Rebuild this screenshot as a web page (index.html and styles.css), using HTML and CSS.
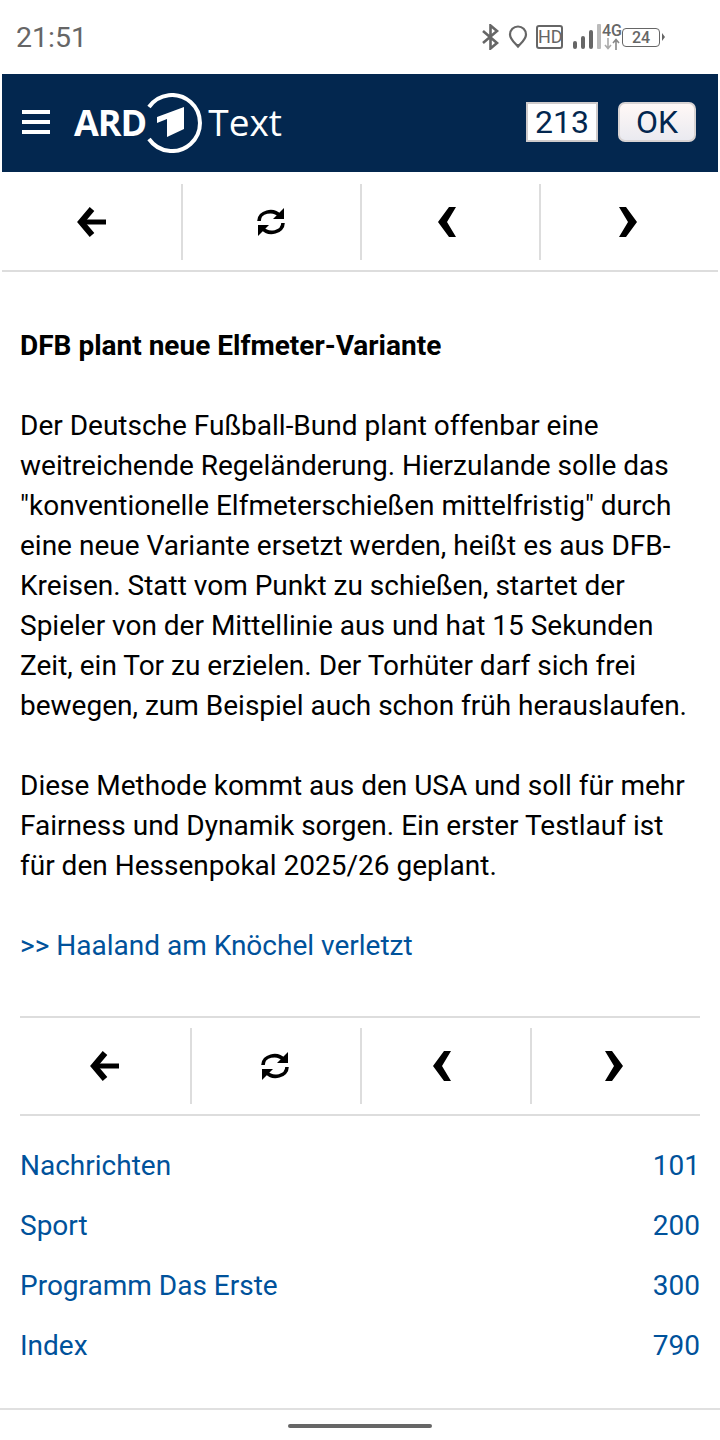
FILE: index.html
```html
<!DOCTYPE html>
<html lang="de">
<head>
  <meta charset="UTF-8" />
  <meta name="viewport" content="width=device-width, initial-scale=1.0" />
  <title>ARD Text</title>
  <link rel="stylesheet" href="styles.css">
</head>
<body>
  <div class="statusbar">
    <span class="uhr">21:51</span>
    <div class="status-icons">
      <svg width="20" height="26" viewBox="0 0 20 26" fill="none" stroke="#666" stroke-width="2.6"><path d="M2 7l14 12-6.500 5.500V1.500L16 7 2 19"/></svg>
      <svg class="pin" width="20" height="24" viewBox="0 0 20 24" fill="none" stroke="#666" stroke-width="2.2"><path d="M10 21.500C7 18 2 14.500 2 9.500a8 8 0 0 1 16 0c0 5-5 8.500-8 12z"/><path d="M7 19h6l-3 3.500z" fill="#666" stroke="none"/></svg>
      <span class="hd">HD</span>
      <svg class="signal" width="28" height="26" viewBox="0 0 28 26"><rect x="0" y="17" width="4" height="8" rx="2" fill="#666"/><rect x="8" y="12" width="4" height="13" rx="2" fill="#666"/><rect x="16" y="6" width="4" height="19" rx="2" fill="#666"/><rect x="24" y="0" width="4" height="25" rx="1" fill="#bbb"/></svg>
      <div class="netz">
        <span class="netz-typ">4G</span>
        <svg width="16" height="12" viewBox="0 0 16 12" fill="none" stroke-width="1.600"><path d="M4 0v10M1 7l3 3.500L7 7" stroke="#aaa"/><path d="M12 12V2M9 5l3-3.500L15 5" stroke="#888"/></svg>
      </div>
      <div class="akku"><span>24</span></div>
      <i class="akku-pol"></i>
    </div>
  </div>

  <header class="kopf">
    <div class="menu"><i></i><i></i><i></i></div>
    <div class="logo">
      <span class="logo-ard">ARD</span>
      <svg class="logo-eins" width="60" height="60" viewBox="0 0 60 60" fill="none"><path d="M7 14A28 28 0 1 1 7 46" stroke="#fff" stroke-width="4"/><path d="M42 14v22l-17 8V26l-10 4v-6z" fill="#fff"/></svg>
      <span class="logo-text">Text</span>
    </div>
    <div class="seite-form">
      <div class="seite-feld">213</div>
      <button class="ok-btn">OK</button>
    </div>
  </header>

  <nav class="nav nav-oben">
    <a class="nav-item"><svg class="ico" width="32" height="32" viewBox="0 0 32 32" fill="none" stroke="#000"><path d="M16 3L5 16l11 13" stroke-width="6"/><path d="M7 16h23" stroke-width="5"/></svg></a>
    <a class="nav-item"><svg class="ico" width="32" height="32" viewBox="0 0 32 32" fill="none" stroke="#000" stroke-width="3.600"><path d="M3 15C3 6 17 2 24 10"/><path d="M27 17c0 9-14 13-21 5"/><path d="M28 2v11H17z" fill="#000" stroke="none"/><path d="M2 30V19h11z" fill="#000" stroke="none"/></svg></a>
    <a class="nav-item"><svg class="ico" width="32" height="32" viewBox="0 0 32 32"><path d="M14 1h7l-9 15 9 15h-7L3 16z" fill="#000"/></svg></a>
    <a class="nav-item"><svg class="ico" width="32" height="32" viewBox="0 0 32 32"><path d="M5 1h7l11 15-11 15H5l9-15z" fill="#000"/></svg></a>
  </nav>

  <main class="inhalt">
    <h1 class="titel">DFB plant neue Elfmeter-Variante</h1>
    <p>Der Deutsche Fußball-Bund plant offenbar eine weitreichende Regeländerung. Hierzulande solle das "konventionelle Elfmeterschießen mittelfristig" durch eine neue Variante ersetzt werden, heißt es aus DFB-Kreisen. Statt vom Punkt zu schießen, startet der Spieler von der Mittellinie aus und hat 15 Sekunden Zeit, ein Tor zu erzielen. Der Torhüter darf sich frei bewegen, zum Beispiel auch schon früh herauslaufen.</p>
    <p>Diese Methode kommt aus den USA und soll für mehr Fairness und Dynamik sorgen. Ein erster Testlauf ist für den Hessenpokal 2025/26 geplant.</p>
    <p><a class="link">&gt;&gt; Haaland am Knöchel verletzt</a></p>

    <nav class="nav nav-unten">
      <a class="nav-item"><svg class="ico" width="32" height="32" viewBox="0 0 32 32" fill="none" stroke="#000"><path d="M16 3L5 16l11 13" stroke-width="6"/><path d="M7 16h23" stroke-width="5"/></svg></a>
      <a class="nav-item"><svg class="ico" width="32" height="32" viewBox="0 0 32 32" fill="none" stroke="#000" stroke-width="3.600"><path d="M3 15C3 6 17 2 24 10"/><path d="M27 17c0 9-14 13-21 5"/><path d="M28 2v11H17z" fill="#000" stroke="none"/><path d="M2 30V19h11z" fill="#000" stroke="none"/></svg></a>
      <a class="nav-item"><svg class="ico" width="32" height="32" viewBox="0 0 32 32"><path d="M14 1h7l-9 15 9 15h-7L3 16z" fill="#000"/></svg></a>
      <a class="nav-item"><svg class="ico" width="32" height="32" viewBox="0 0 32 32"><path d="M5 1h7l11 15-11 15H5l9-15z" fill="#000"/></svg></a>
    </nav>

    <ul class="rubriken">
      <li><a>Nachrichten</a><a>101</a></li>
      <li><a>Sport</a><a>200</a></li>
      <li><a>Programm Das Erste</a><a>300</a></li>
      <li><a>Index</a><a>790</a></li>
    </ul>
  </main>

  <div class="homebar"><i></i></div>
</body>
</html>
```

FILE: styles.css
```css
body {
  margin: 0;
  height: 1440px;
  display: flex;
  flex-direction: column;
  overflow: hidden;
  background: #fff;
  color: #000;
  font-family: Roboto, sans-serif;
  font-size: 28px;
  line-height: 40px;
}
.statusbar {
  height: 74px;
  display: flex;
  justify-content: space-between;
  align-items: center;
  padding: 0 55px 0 16px;
  box-sizing: border-box;
  color: #666;
}
.uhr {
  font-size: 28.5px;
  padding-top: 2px;
}
.status-icons {
  display: flex;
  align-items: center;
  color: #666;
}
.pin {
  margin-left: 7px;
}
.hd {
  margin-left: 8px;
  width: 23px;
  height: 20px;
  border: 2px solid #666;
  border-radius: 3px;
  font-size: 18px;
  line-height: 20px;
  text-align: center;
}
.signal {
  margin-left: 10px;
}
.netz {
  display: flex;
  flex-direction: column;
  align-items: center;
  width: 18px;
  margin-left: 2px;
}
.netz-typ {
  font-size: 16px;
  line-height: 14px;
  font-weight: 500;
}
.akku {
  margin-left: 1px;
  width: 36px;
  height: 17px;
  border: 1.500px solid #666;
  border-radius: 4px;
  font-size: 16px;
  font-weight: 500;
  line-height: 17px;
  text-align: center;
}
.akku-pol {
  width: 0;
  height: 0;
  margin-left: 2px;
  border-left: 3px solid #666;
  border-top: 4px solid transparent;
  border-bottom: 4px solid transparent;
}
.kopf {
  height: 98px;
  margin: 0 2px;
  padding: 0 22px 0 20px;
  display: flex;
  align-items: center;
  background: #03274f;
  color: #fff;
}
.menu {
  width: 28px;
  display: flex;
  flex-direction: column;
  gap: 6px;
  margin-top: -2px;
}
.menu i {
  height: 4px;
  background: #fff;
}
.logo {
  display: flex;
  align-items: center;
  margin-left: 24px;
}
.logo-ard {
  font-size: 36px;
  font-weight: 700;
  font-family: "Open Sans", sans-serif;
  letter-spacing: -1px;
}
.logo-eins {
  margin-left: -4px;
}
.logo-text {
  font-size: 37px;
  font-family: "Open Sans", sans-serif;
  font-weight: 400;
  margin-left: 6px;
  margin-top: -3px;
}
.seite-form {
  margin-left: auto;
  display: flex;
  align-items: center;
  gap: 20px;
  margin-top: -2px;
}
.seite-feld {
  width: 68px;
  height: 36px;
  border: 2px solid #cfcbcb;
  background: #fff;
  color: #03274f;
  font-size: 32px;
  line-height: 36px;
  text-align: center;
}
.ok-btn {
  width: 78px;
  height: 40px;
  padding: 0;
  border: 2px solid #d8d3d3;
  border-radius: 7px;
  background: linear-gradient(#fff8f6, #eaeaf0);
  color: #03274f;
  font-family: Roboto, sans-serif;
  font-size: 32px;
  line-height: 34px;
}
.nav {
  display: grid;
  grid-template-columns: repeat(4, 1fr);
  box-sizing: border-box;
}
.nav-item {
  display: flex;
  justify-content: center;
  align-items: center;
  height: 76px;
  border-left: 2px solid #ddd;
}
.nav-item:first-child {
  border-left: none;
}
.ico {
  filter: blur(0.5px);
}
.nav-oben {
  margin: 0 2px;
  padding: 12px 0 10px;
  height: 100px;
  border-bottom: 2px solid #ddd;
}
.nav-unten {
  margin-top: 50px;
  padding: 10px 0;
  height: 100px;
  border-top: 2px solid #ddd;
  border-bottom: 2px solid #ddd;
}
.inhalt {
  flex: 1;
  padding: 54px 20px 0;
}
.titel {
  margin: 0 0 40px;
  font-size: 28px;
  line-height: 40px;
  font-weight: 700;
}
p {
  margin: 0 0 40px;
}
.link, .rubriken a {
  color: #00529b;
}
.rubriken {
  list-style: none;
  margin: 20px 0 0;
  padding: 0;
}
.rubriken li {
  display: flex;
  justify-content: space-between;
  height: 60px;
  line-height: 60px;
}
.homebar {
  height: 32px;
  border-top: 2px solid #e0e0e0;
  display: flex;
  justify-content: center;
  padding-top: 14px;
  box-sizing: border-box;
}
.homebar i {
  width: 144px;
  height: 4px;
  border-radius: 2px;
  background: #666;
}
```
